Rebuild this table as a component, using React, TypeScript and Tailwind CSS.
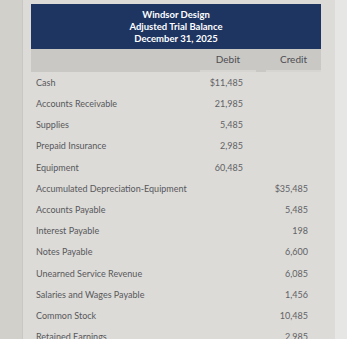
import React from "react";

const rows: [string, string, string][] = [
  ["Cash", "$11,485", ""],
  ["Accounts Receivable", "21,985", ""],
  ["Supplies", "5,485", ""],
  ["Prepaid Insurance", "2,985", ""],
  ["Equipment", "60,485", ""],
  ["Accumulated Depreciation-Equipment", "", "$35,485"],
  ["Accounts Payable", "", "5,485"],
  ["Interest Payable", "", "198"],
  ["Notes Payable", "", "6,600"],
  ["Unearned Service Revenue", "", "6,085"],
  ["Salaries and Wages Payable", "", "1,456"],
  ["Common Stock", "", "10,485"],
  ["Retained Earnings", "", "2,985"],
];

export default function App() {
  return (
    <div
      className="flex w-[347px] h-[339px] overflow-hidden bg-[#d5d3ce]"
      style={{ fontFamily: "Lato, 'Open Sans', sans-serif" }}
    >
      {/* left margin strip */}
      <div className="w-[23px] shrink-0 bg-[#d2d0cb] border-r border-[#c9c7c2]" />

      {/* main panel */}
      <div className="w-[312px] shrink-0 bg-[#dcdbd7] pl-[8px] pt-[4px]">
        <div className="w-[290px]">
          {/* title */}
          <div className="h-[45px] bg-[#1e3562] flex flex-col items-center justify-center text-white font-bold text-[9.5px] leading-[12px]">
            <div>Windsor Design</div>
            <div>Adjusted Trial Balance</div>
            <div>December 31, 2025</div>
          </div>

          {/* column headings */}
          <div className="flex h-[23px] bg-[#c9c8c4] text-[10px] text-[#4d4d52]">
            <div className="w-[169px]" />
            <div className="w-[56px] flex items-center justify-center border-b-2 border-[#d6d5d1]">
              Debit
            </div>
            <div className="w-[10px]" />
            <div className="w-[55px] flex items-center justify-center border-b-2 border-[#d6d5d1]">
              Credit
            </div>
          </div>

          {/* rows */}
          {rows.map(([label, debit, credit]) => (
            <div key={label} className="flex h-[21.2px] items-center text-[9px] text-[#58585c]">
              <div className="w-[169px] pl-[5px] whitespace-nowrap">{label}</div>
              <div className="w-[56px] text-right pr-[13px] text-[#626266]">{debit}</div>
              <div className="w-[10px]" />
              <div className="w-[55px] text-right pr-[13px] text-[#626266]">{credit}</div>
            </div>
          ))}
        </div>
      </div>

      {/* right margin */}
      <div className="flex-1 bg-[#e6e6e4]" />
    </div>
  );
}
